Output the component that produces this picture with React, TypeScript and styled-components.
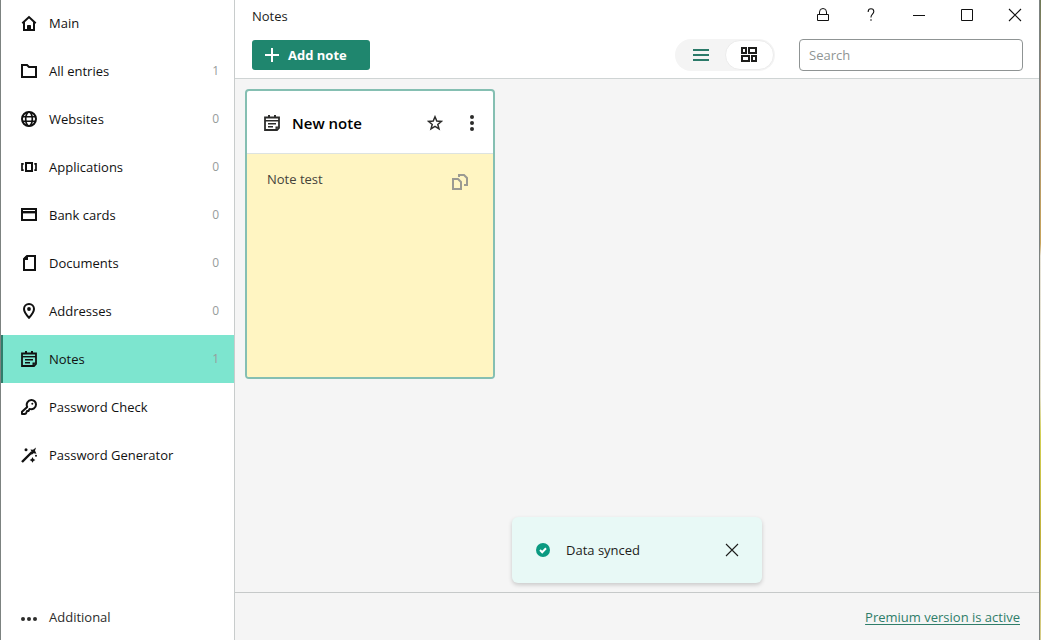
import React from 'react';
import styled, { createGlobalStyle, css } from 'styled-components';

const GlobalStyle = createGlobalStyle`
  *, *::before, *::after { box-sizing: border-box; }
  body {
    margin: 0;
    color: #1d1d1b;
    background: #fff;
    font-family: "Open Sans", "Noto Sans", sans-serif;
    font-size: 13px;
    line-height: 20px;
  }
  button, input { font: inherit; color: inherit; }
  button { border: 0; padding: 0; background: none; cursor: pointer; }
  svg { display: block; flex: none; }
`;

const Desktop = styled.div`
  display: flex;
  min-height: 100vh;
  padding-right: 1px;
  background: linear-gradient(#6f7a55 0%, #a08e78 12%, #c9a55c 38%, #e8e4d8 40%, #e3e0cc 62%, #d3cf52 68%, #c2b13c 84%, #d8cf8a 100%);
`;

const AppWindow = styled.div`
  flex: 1;
  display: flex;
  min-width: 0;
  border: solid #7c8280;
  border-width: 0 1px;
  background: #fff;
`;

const Sidebar = styled.nav`
  flex: none;
  display: flex;
  flex-direction: column;
  width: 234px;
  border-right: 1px solid #c8cccc;
`;

const NavList = styled.ul`
  flex: 1;
  margin: -1px 0 0;
  padding: 0;
  list-style: none;
`;

const NavItem = styled.a<{ $active?: boolean; $muted?: boolean }>`
  display: flex;
  align-items: center;
  gap: 12px;
  height: 48px;
  padding: 0 15px 0 20px;
  color: #111;
  text-decoration: none;
  ${({ $muted }) => $muted && css`
    padding-top: 2px;
    color: #2c2c2b;
  `}
  ${({ $active }) => $active && css`
    background: #7de5cf;
    box-shadow: inset 2px 0 #2f7d6b;
  `}
`;

const NavLabel = styled.span`
  flex: 1;
`;

const Count = styled.span`
  color: #979c9b;
  font-size: 12px;
`;

const Main = styled.main`
  position: relative;
  flex: 1;
  display: flex;
  flex-direction: column;
  min-width: 0;
  background: #f5f5f5;
`;

const Header = styled.header`
  padding-bottom: 7px;
  border-bottom: 1px solid #cfd4d4;
  background: #fff;
`;

const TitleBar = styled.div`
  display: flex;
  align-items: center;
  justify-content: space-between;
  height: 32px;
  padding-left: 17px;
`;

const Title = styled.h1`
  margin: 0;
  font-size: 13px;
  font-weight: 400;
`;

const WindowButtons = styled.div`
  display: flex;
  align-self: flex-start;
`;

const WindowButton = styled.button`
  display: grid;
  place-items: center;
  width: 48px;
  height: 30px;
  color: #111;
`;

const Toolbar = styled.div`
  display: flex;
  align-items: center;
  gap: 24px;
  height: 32px;
  margin-top: 7px;
  padding: 0 16px 0 17px;
`;

const AddButton = styled.button`
  display: flex;
  align-items: center;
  gap: 8px;
  height: 30px;
  margin-right: auto;
  padding: 0 23px 0 12px;
  border-radius: 3px;
  background: #1f866e;
  color: #fff;
  font-weight: 700;
`;

const ViewSwitch = styled.div`
  display: flex;
  align-items: center;
  height: 32px;
  padding: 0 1px 0 2px;
  border-radius: 16px;
  background: #f4f4f4;
`;

const ViewButton = styled.button<{ $selected?: boolean }>`
  display: grid;
  place-items: center;
  width: 48px;
  height: 30px;
  border-radius: 15px;
  color: #2b7a69;
  ${({ $selected }) => $selected && css`
    width: 49px;
    padding-right: 1px;
    border: 1px solid #ececec;
    background: #fff;
    color: #1d1d1b;
  `}
`;

const Search = styled.input`
  width: 224px;
  height: 32px;
  padding: 0 9px;
  border: 1px solid #8f9494;
  border-radius: 4px;
  outline: 0;
  background: #fff;
  &::placeholder { color: #8f9594; opacity: 1; }
`;

const Cards = styled.section`
  flex: 1;
  display: flex;
  flex-wrap: wrap;
  align-items: flex-start;
  gap: 12px;
  padding: 10px;
`;

const Card = styled.article`
  width: 250px;
  overflow: hidden;
  border: 2px solid #85bfb2;
  border-radius: 4px;
  background: #fff;
`;

const CardHeader = styled.div`
  display: flex;
  align-items: center;
  height: 63px;
  padding: 2px 13px 0 17px;
  border-bottom: 1px solid #dde3e0;
  color: #2c2c2b;
`;

const CardTitle = styled.h2`
  flex: 1;
  margin: 0 0 0 12px;
  color: #000;
  font-size: 15px;
  font-weight: 600;
`;

const CardAction = styled.button`
  display: grid;
  place-items: center;
  width: 16px;
  height: 24px;
  margin-left: 21px;
`;

const CardBody = styled.div`
  display: flex;
  align-items: flex-start;
  justify-content: space-between;
  min-height: 223px;
  padding: 15px 25px 15px 20px;
  background: #fff5c2;
  color: #45433a;
`;

const CopyButton = styled.button`
  margin-top: 5px;
  color: #9b9a92;
`;

const Toast = styled.div`
  position: absolute;
  bottom: 57px;
  left: calc(50% - 125px);
  display: flex;
  align-items: center;
  gap: 16px;
  width: 250px;
  height: 66px;
  padding: 0 22px 0 24px;
  border-radius: 6px;
  background: #e8f9f6;
  box-shadow: 0 2px 4px rgba(0, 0, 0, 0.18);
`;

const ToastText = styled.span`
  flex: 1;
`;

const Footer = styled.footer`
  display: flex;
  align-items: center;
  justify-content: flex-end;
  height: 48px;
  padding: 0 19px;
  border-top: 1px solid #c6c9c9;
`;

const PremiumLink = styled.a`
  color: #2f7d69;
  text-underline-offset: 2px;
`;

type IconProps = { children: React.ReactNode; size?: number };

const Icon = ({ children, size = 16 }: IconProps) => (
  <svg width={size} height={size} viewBox={`0 0 ${size} ${size}`} fill="none" stroke="currentColor" strokeWidth="2" aria-hidden="true">
    {children}
  </svg>
);

const HomeIcon = () => (
  <Icon>
    <path d="M1.300 8.200 8 2l6.700 6.200" />
    <path d="M3 7v8h10V7" />
    <path d="M6.500 15v-4.500h3V15z" fill="currentColor" strokeWidth="1" />
  </Icon>
);
const FolderIcon = () => (
  <Icon><path d="M1 2h5l2 2h7v10H1z" /></Icon>
);
const GlobeIcon = () => (
  <Icon>
    <circle cx="8" cy="8" r="7" />
    <ellipse cx="8" cy="8" rx="3.300" ry="7" strokeWidth="1.700" />
    <path d="M1 5.700h14M1 10.300h14" strokeWidth="1.600" />
  </Icon>
);
const AppsIcon = () => (
  <Icon>
    <path d="M5 4h6v8H5z" />
    <path d="M2.700 4.800H1v6.400h1.700M13.300 4.800H15v6.400h-1.700" strokeWidth="1.700" />
  </Icon>
);
const CardIcon = () => (
  <Icon>
    <path d="M1 2h14v11H1z" />
    <path d="M1 5.200h14" strokeWidth="2.400" />
  </Icon>
);
const DocumentIcon = () => (
  <Icon>
    <path d="M6 1h8v14H3V4z" />
    <path d="M3 5V3l2-2h2v4z" fill="currentColor" stroke="none" />
  </Icon>
);
const PinIcon = () => (
  <Icon>
    <path d="M8 14.700C5 11.500 3 8.700 3 6a5 5 0 0 1 10 0c0 2.700-2 5.500-5 8.700z" />
    <circle cx="8" cy="6" r="1.900" fill="currentColor" stroke="none" />
  </Icon>
);
const NoteIcon = () => (
  <Icon>
    <path d="M1 2.500h14V13l-2 2H1z" strokeWidth="1.800" />
    <path d="M1 5.700h14" strokeWidth="1.400" />
    <path d="M5 0v3M11 0v3" />
    <path d="M4 8.700h8M4 11.700h5" strokeWidth="1.400" />
    <path d="M11.500 11.500H15L11.500 15z" fill="currentColor" stroke="none" />
  </Icon>
);
const KeyIcon = () => (
  <Icon>
    <path d="M6.200 8C4.700 4.500 7 1 10.300 1A4.600 4.600 0 0 1 15 5.600C15 9 11.800 10.800 8.600 9.900L7.500 12H6l-1 2.500-1.500.5H1v-2.200z" strokeLinejoin="round" />
    <circle cx="11.300" cy="4.700" r="1" fill="currentColor" stroke="none" />
  </Icon>
);
const WandIcon = () => (
  <Icon>
    <path d="M1 15 11 5" strokeWidth="2.400" />
    <g fill="currentColor" stroke="none">
      <path d="m9.500 2.500 2.500.3L15 .5l-1 3.200 1.500 3-3-.4-2 1.800.2-3.200z" />
      <circle cx="5" cy="2.700" r="1.500" />
      <path d="m11.500 10 1 1.900 1.900 1-1.900 1-1 1.900-1-1.900-1.900-1 1.900-1z" />
      <circle cx="15" cy="8.700" r="1" />
    </g>
  </Icon>
);
const DotsIcon = () => (
  <Icon>
    <g fill="currentColor" stroke="none">
      <circle cx="2" cy="10" r="2" /><circle cx="8" cy="10" r="2" /><circle cx="14" cy="10" r="2" />
    </g>
  </Icon>
);
const MoreIcon = () => (
  <Icon>
    <g fill="currentColor" stroke="none">
      <circle cx="8" cy="2" r="2" /><circle cx="8" cy="8" r="2" /><circle cx="8" cy="14" r="2" />
    </g>
  </Icon>
);
const StarIcon = () => (
  <Icon><path d="m8 1.800 1.800 4.300 4.600.3-3.600 3 1.200 4.500L8 11.400l-4 2.500 1.200-4.500-3.600-3 4.600-.3z" strokeWidth="1.500" /></Icon>
);
const CopyIcon = () => (
  <Icon>
    <path d="M1 15V5h5l3 3v7z" />
    <path d="M7 3V1h5l3 3v7h-3" />
  </Icon>
);
const LockIcon = () => (
  <Icon>
    <path d="M2.500 7.500h11v6h-11zM4.500 7.500V5a3.500 3.500 0 0 1 7 0v2.500" strokeWidth="1" />
  </Icon>
);
const HelpIcon = () => (
  <Icon>
    <path d="M5.200 5V4.500a2.800 2.800 0 0 1 5.600 0c0 2.500-2.800 2.700-2.800 5.500v.5" strokeWidth="1.100" />
    <circle cx="8" cy="13" r=".8" fill="currentColor" stroke="none" />
  </Icon>
);
const MinimizeIcon = () => (
  <Icon><path d="M2 8.500h12" strokeWidth="1" /></Icon>
);
const MaximizeIcon = () => (
  <Icon><path d="M2.500 2.500h11v11h-11z" strokeWidth="1" /></Icon>
);
const CloseIcon = () => (
  <Icon><path d="m2 2 12 12M14 2 2 14" strokeWidth="1.100" /></Icon>
);
const PlusIcon = () => (
  <Icon><path d="M8 1v14M1 8h14" /></Icon>
);
const ListIcon = () => (
  <Icon><path d="M0 3h16M0 8h16M0 13h16" /></Icon>
);
const GridIcon = () => (
  <Icon><path d="M1 1h4v5H1zM8 1h7v5H8zM1 9h7v5H1zM11 9h4v5h-4z" /></Icon>
);
const CheckIcon = () => (
  <Icon size={14}>
    <circle cx="7" cy="7" r="7" fill="#0b9a81" stroke="none" />
    <path d="m4 7 2.200 2.200L10 5.200" stroke="#fff" />
  </Icon>
);

const navItems = [
  { label: 'Main', icon: <HomeIcon /> },
  { label: 'All entries', icon: <FolderIcon />, count: 1 },
  { label: 'Websites', icon: <GlobeIcon />, count: 0 },
  { label: 'Applications', icon: <AppsIcon />, count: 0 },
  { label: 'Bank cards', icon: <CardIcon />, count: 0 },
  { label: 'Documents', icon: <DocumentIcon />, count: 0 },
  { label: 'Addresses', icon: <PinIcon />, count: 0 },
  { label: 'Notes', icon: <NoteIcon />, count: 1, active: true },
  { label: 'Password Check', icon: <KeyIcon /> },
  { label: 'Password Generator', icon: <WandIcon /> },
];

export default function App() {
  return (
    <>
      <GlobalStyle />
      <Desktop>
        <AppWindow>
          <Sidebar>
            <NavList>
              {navItems.map(({ label, icon, count, active }) => (
                <li key={label}>
                  <NavItem href="#" $active={active} aria-current={active ? 'page' : undefined}>
                    {icon}
                    <NavLabel>{label}</NavLabel>
                    {count !== undefined && <Count>{count}</Count>}
                  </NavItem>
                </li>
              ))}
            </NavList>
            <NavItem href="#" $muted>
              <DotsIcon />
              <NavLabel>Additional</NavLabel>
            </NavItem>
          </Sidebar>
          <Main>
            <Header>
              <TitleBar>
                <Title>Notes</Title>
                <WindowButtons>
                  <WindowButton aria-label="Lock"><LockIcon /></WindowButton>
                  <WindowButton aria-label="Help"><HelpIcon /></WindowButton>
                  <WindowButton aria-label="Minimize"><MinimizeIcon /></WindowButton>
                  <WindowButton aria-label="Maximize"><MaximizeIcon /></WindowButton>
                  <WindowButton aria-label="Close"><CloseIcon /></WindowButton>
                </WindowButtons>
              </TitleBar>
              <Toolbar>
                <AddButton><PlusIcon />Add note</AddButton>
                <ViewSwitch role="group" aria-label="View">
                  <ViewButton aria-label="List view" aria-pressed={false}><ListIcon /></ViewButton>
                  <ViewButton aria-label="Grid view" aria-pressed $selected><GridIcon /></ViewButton>
                </ViewSwitch>
                <Search type="search" aria-label="Search" placeholder="Search" />
              </Toolbar>
            </Header>
            <Cards>
              <Card>
                <CardHeader>
                  <NoteIcon />
                  <CardTitle>New note</CardTitle>
                  <CardAction aria-label="Add to favorites"><StarIcon /></CardAction>
                  <CardAction aria-label="More actions"><MoreIcon /></CardAction>
                </CardHeader>
                <CardBody>
                  <span>Note test</span>
                  <CopyButton aria-label="Copy"><CopyIcon /></CopyButton>
                </CardBody>
              </Card>
            </Cards>
            <Footer>
              <PremiumLink href="#">Premium version is active</PremiumLink>
            </Footer>
            <Toast role="status">
              <CheckIcon />
              <ToastText>Data synced</ToastText>
              <button aria-label="Dismiss"><CloseIcon /></button>
            </Toast>
          </Main>
        </AppWindow>
      </Desktop>
    </>
  );
}
